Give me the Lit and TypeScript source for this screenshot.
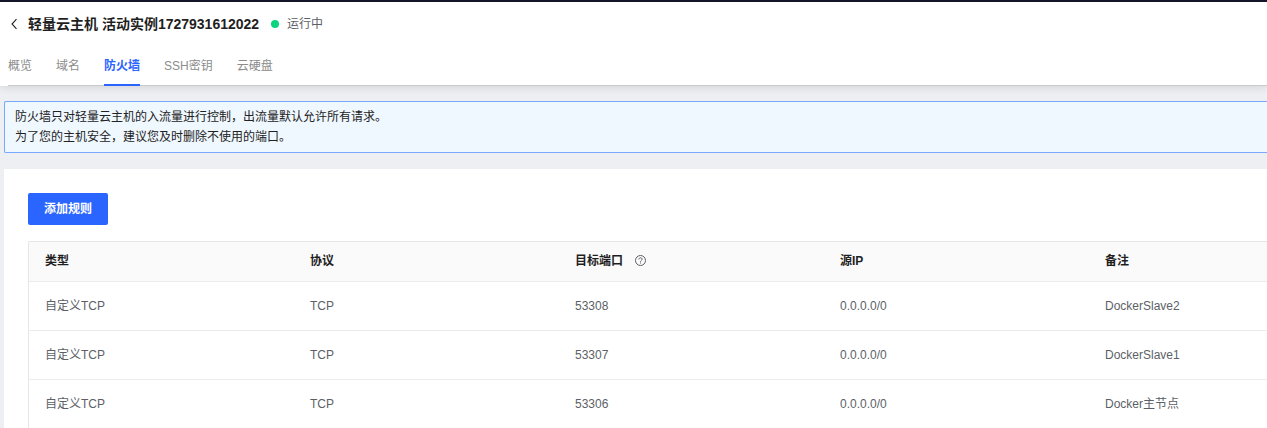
import { LitElement, html, css } from "lit";
import { customElement, state } from "lit/decorators.js";
import { classMap } from "lit/directives/class-map.js";

interface Rule {
  type: string;
  protocol: string;
  port: string;
  source: string;
  remark: string;
}

@customElement("app-root")
export class AppRoot extends LitElement {
  @state() private activeTab = "防火墙";

  private tabs = ["概览", "域名", "防火墙", "SSH密钥", "云硬盘"];

  private rules: Rule[] = [
    { type: "自定义TCP", protocol: "TCP", port: "53308", source: "0.0.0.0/0", remark: "DockerSlave2" },
    { type: "自定义TCP", protocol: "TCP", port: "53307", source: "0.0.0.0/0", remark: "DockerSlave1" },
    { type: "自定义TCP", protocol: "TCP", port: "53306", source: "0.0.0.0/0", remark: "Docker主节点" },
  ];

  static styles = css`
    :host {
      display: block;
      min-height: 100vh;
      box-sizing: border-box;
      overflow: hidden;
      border-top: 2px solid #141528;
      background: #eeeff3;
      color: #5c5f66;
      font: 12px/20px "Liberation Sans", "Noto Sans CJK SC", sans-serif;
    }
    *,
    *::before {
      box-sizing: border-box;
    }
    button {
      font: inherit;
      border: 0;
      cursor: pointer;
    }
    .header {
      background: #fff;
      box-shadow: 0 2px 8px rgba(0, 0, 0, 0.1);
      padding-left: 8px;
    }
    .heading {
      display: flex;
      align-items: center;
      height: 44px;
    }
    .back {
      display: flex;
      width: 20px;
      padding: 0 0 0 2px;
      background: none;
      color: #222;
    }
    h1 {
      margin: 0;
      font-size: 14px;
      line-height: 20px;
      font-weight: 700;
      color: #1f1f1f;
    }
    .status {
      display: flex;
      align-items: center;
      gap: 8px;
      margin-left: 12px;
    }
    .status::before {
      content: "";
      width: 8px;
      height: 8px;
      border-radius: 50%;
      background: #0bd27c;
    }
    .tabs {
      display: flex;
      gap: 24px;
      height: 40px;
      margin-bottom: -1px;
      border-bottom: 1px solid #c9cacd;
    }
    .tab {
      height: 40px;
      padding: 2px 0 0;
      border-bottom: 2px solid transparent;
      background: none;
      color: #8c8c8c;
    }
    .tab.active {
      border-bottom-color: #2b65ff;
      color: #2b65ff;
      font-weight: 700;
    }
    .main {
      padding: 16px 0 0 4px;
    }
    .notice {
      padding: 5px 10px;
      border: 1px solid #7aa7ff;
      border-right: 0;
      border-radius: 2px 0 0 2px;
      background: #f0f8ff;
      color: #222;
    }
    .notice p {
      margin: 0;
    }
    .panel {
      margin-top: 16px;
      padding: 24px 0 0 24px;
      background: #fff;
    }
    .add {
      display: block;
      height: 32px;
      padding: 0 16px;
      border-radius: 2px;
      background: #2b65ff;
      color: #fff;
      font-weight: 700;
    }
    table {
      width: 100%;
      margin-top: 16px;
      table-layout: fixed;
      border: 1px solid #e6e6e6;
      border-width: 1px 0 0 1px;
      border-radius: 2px 0 0 0;
      border-spacing: 0;
    }
    .col {
      width: 265px;
    }
    th,
    td {
      padding: 0 16px;
      border-bottom: 1px solid #ececec;
      text-align: left;
      white-space: nowrap;
    }
    th {
      height: 40px;
      padding-bottom: 2px;
      background: #fafafa;
      color: #1f1f1f;
      font-weight: 700;
    }
    td {
      height: 49px;
    }
    .label {
      display: flex;
      align-items: center;
      gap: 12px;
    }
  `;

  private helpIcon() {
    return html`<svg width="11" height="11" viewBox="0 0 11 11" fill="none" stroke="#5c5f66" role="img" aria-label="帮助">
      <circle cx="5.5" cy="5.5" r="5" />
      <path d="M3.9 4.4c0-2.1 3.2-2.1 3.2-.1 0 1.1-1.6 1.2-1.6 2.4M5.5 7.5v1" />
    </svg>`;
  }

  render() {
    return html`
      <header class="header">
        <div class="heading">
          <button class="back" aria-label="返回">
            <svg width="9" height="12" viewBox="0 0 9 12" fill="none" stroke="currentColor" stroke-width="1.1">
              <path d="M6.5 1.2 2 6l4.5 4.8" />
            </svg>
          </button>
          <h1>轻量云主机 活动实例1727931612022</h1>
          <span class="status">运行中</span>
        </div>
        <nav class="tabs" role="tablist">
          ${this.tabs.map(
            (t) => html`<button
              role="tab"
              aria-selected=${t === this.activeTab ? "true" : "false"}
              class=${classMap({ tab: true, active: t === this.activeTab })}
              @click=${() => (this.activeTab = t)}
            >${t}</button>`
          )}
        </nav>
      </header>
      <main class="main">
        <div class="notice">
          <p>防火墙只对轻量云主机的入流量进行控制，出流量默认允许所有请求。</p>
          <p>为了您的主机安全，建议您及时删除不使用的端口。</p>
        </div>
        <section class="panel">
          <button class="add">添加规则</button>
          <table>
            <colgroup>
              <col class="col" /><col class="col" /><col class="col" /><col class="col" /><col />
            </colgroup>
            <thead>
              <tr>
                <th>类型</th>
                <th>协议</th>
                <th><span class="label">目标端口 ${this.helpIcon()}</span></th>
                <th>源IP</th>
                <th>备注</th>
              </tr>
            </thead>
            <tbody>
              ${this.rules.map(
                (r) => html`<tr>
                  <td>${r.type}</td>
                  <td>${r.protocol}</td>
                  <td>${r.port}</td>
                  <td>${r.source}</td>
                  <td>${r.remark}</td>
                </tr>`
              )}
            </tbody>
          </table>
        </section>
      </main>
    `;
  }
}
